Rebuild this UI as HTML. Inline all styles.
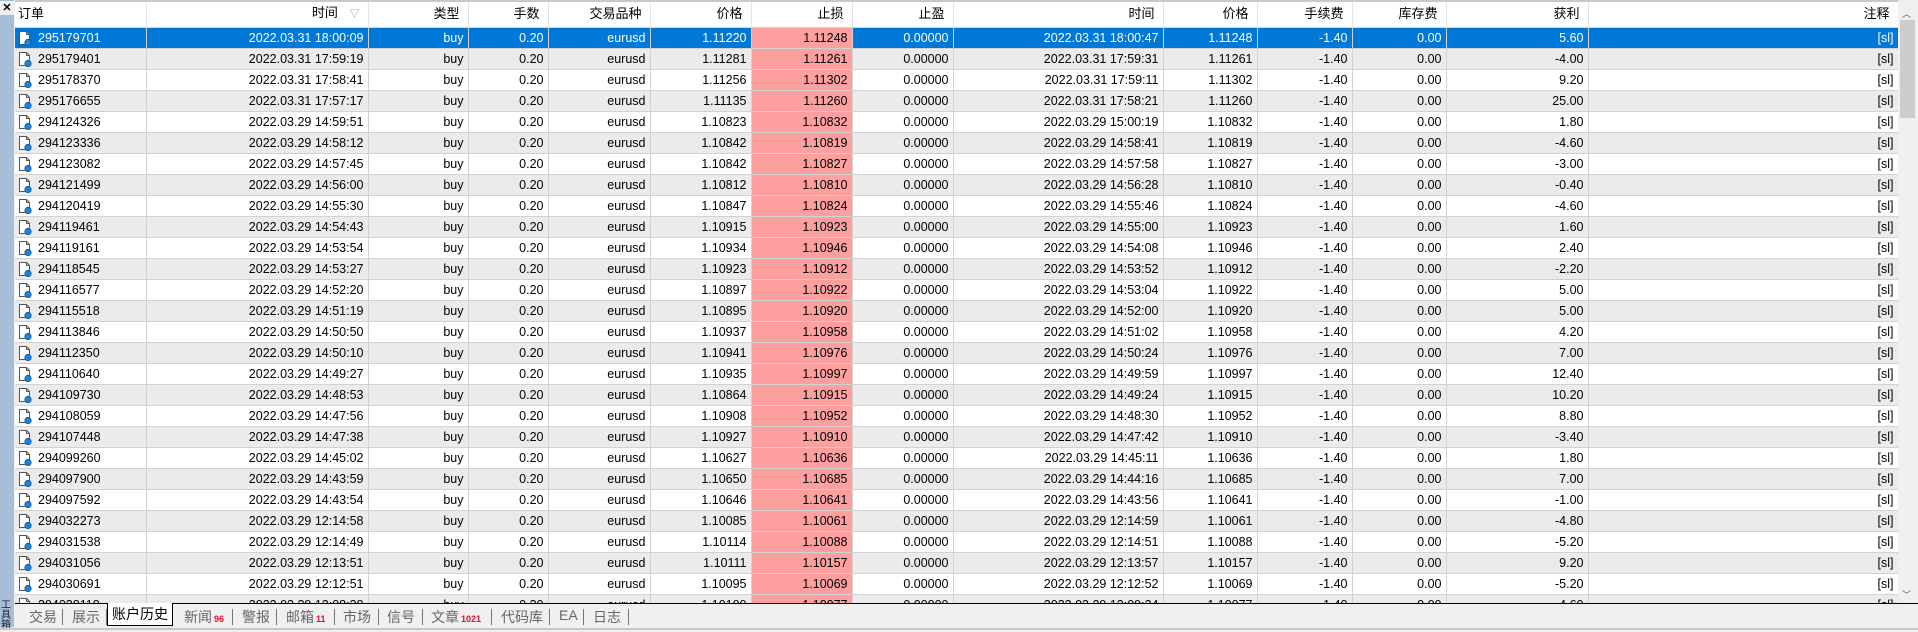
<!DOCTYPE html>
<html><head><meta charset="utf-8">
<style>
*{margin:0;padding:0;box-sizing:border-box}
body{width:1918px;height:632px;overflow:hidden;background:#f0f0f0;font-family:"Liberation Sans","Noto Sans CJK SC",sans-serif;font-size:12.5px;color:#000;position:relative}
#side{position:absolute;left:0;top:0;width:14px;height:627px;background:#a7bdd8}
#side .x{position:absolute;top:1px;font-size:11px;font-weight:bold;color:#000;background:#f0f0f0;width:14px;height:14px;left:0;text-align:center;line-height:14px}
#side .v{position:absolute;left:1px;top:601px;width:12px;font-size:10px;line-height:10px;color:#223}
#grid{position:absolute;left:15px;top:0;width:1883px;height:603px;overflow:hidden;background:#fff;border-top:2px solid #c8c8c8}
table{border-collapse:collapse;table-layout:fixed;width:1883px}
td,th{height:21px;border-right:1px solid #d2d2d2;border-bottom:1px solid #d2d2d2;text-align:right;padding:0 4px 0 0;white-space:nowrap;overflow:hidden;font-weight:normal;line-height:20px}
th{height:25px;border-bottom:1px solid #d2d2d2;border-right:1px solid #e4e4e4;padding-right:8px;font-size:13px}
th.l{text-align:left;padding-left:3px}
td.l{text-align:left;padding-left:3px}
tr:nth-child(even) td{background:#ebebeb}
tr.sel td{background:#0078d7;color:#fff}
td.p,tr.sel td.p,tr:nth-child(even) td.p{background:#ffa0a0;color:#000}
td.l svg{vertical-align:-4px;margin-right:6px}
#sb{position:absolute;left:1898px;top:0;width:20px;height:603px;background:#f0f0f0}
#sb .th{position:absolute;left:2px;top:20px;width:15px;height:98px;background:#cdcdcd}
#sb .u{position:absolute;left:4px;top:7px;font-size:9px;color:#555}
#sb .d{position:absolute;left:4px;top:588px;font-size:9px;color:#555}
#tabs{position:absolute;left:15px;top:603px;width:1903px;height:25px;border-top:1px solid #000;background:#f0f0f0}
#tabs span{position:absolute;top:3px;color:#666;font-size:14px}
#tabs i{position:absolute;top:5px;width:1px;height:16px;background:#777}
#tabs b{color:#e0102a;font-size:9px;font-weight:bold;margin-left:2px}
#act{position:absolute;left:92px;top:-1px!important;width:66px;height:23px;background:#fff;border:1px solid #000;border-top:none;color:#000!important;text-align:center;line-height:22px}
#bl{position:absolute;left:0;top:628px;width:1918px;height:2px;background:#c8c8c8}
</style></head><body>
<div id="side"><div class="x">✕</div><div class="v">工具箱</div></div>
<div id="grid">
<table>
<colgroup><col style="width:131px"><col style="width:222px"><col style="width:100px"><col style="width:80px"><col style="width:102px"><col style="width:101px"><col style="width:101px"><col style="width:101px"><col style="width:210px"><col style="width:94px"><col style="width:95px"><col style="width:94px"><col style="width:142px"><col style="width:310px"></colgroup>
<tr><th class="l">订单</th><th>时间 <span style="color:#999;font-size:10px;margin-left:8px">▽</span></th><th>类型</th><th>手数</th><th>交易品种</th><th>价格</th><th>止损</th><th>止盈</th><th>时间</th><th>价格</th><th>手续费</th><th>库存费</th><th>获利</th><th>注释</th></tr>
<tbody id="tb"></tbody>
</table>
</div>
<div id="sb"><div class="u">︿</div><div class="th"></div><div class="d">﹀</div></div>
<div id="tabs">
<span style="left:14px">交易</span><i style="left:47px"></i>
<span style="left:57px">展示</span><i style="left:91px"></i>
<span id="act">账户历史</span>
<span style="left:169px">新闻<b>96</b></span><i style="left:217px"></i>
<span style="left:227px">警报</span><i style="left:261px"></i>
<span style="left:271px">邮箱<b>11</b></span><i style="left:319px"></i>
<span style="left:328px">市场</span><i style="left:363px"></i>
<span style="left:372px">信号</span><i style="left:407px"></i>
<span style="left:416px">文章<b>1021</b></span><i style="left:476px"></i>
<span style="left:486px">代码库</span><i style="left:534px"></i>
<span style="left:544px">EA</span><i style="left:568px"></i>
<span style="left:578px">日志</span><i style="left:613px"></i>
</div>
<div id="bl"></div>
<script>
var d=[
["295179701","2022.03.31 18:00:09","1.11220","1.11248","2022.03.31 18:00:47","5.60"],
["295179401","2022.03.31 17:59:19","1.11281","1.11261","2022.03.31 17:59:31","-4.00"],
["295178370","2022.03.31 17:58:41","1.11256","1.11302","2022.03.31 17:59:11","9.20"],
["295176655","2022.03.31 17:57:17","1.11135","1.11260","2022.03.31 17:58:21","25.00"],
["294124326","2022.03.29 14:59:51","1.10823","1.10832","2022.03.29 15:00:19","1.80"],
["294123336","2022.03.29 14:58:12","1.10842","1.10819","2022.03.29 14:58:41","-4.60"],
["294123082","2022.03.29 14:57:45","1.10842","1.10827","2022.03.29 14:57:58","-3.00"],
["294121499","2022.03.29 14:56:00","1.10812","1.10810","2022.03.29 14:56:28","-0.40"],
["294120419","2022.03.29 14:55:30","1.10847","1.10824","2022.03.29 14:55:46","-4.60"],
["294119461","2022.03.29 14:54:43","1.10915","1.10923","2022.03.29 14:55:00","1.60"],
["294119161","2022.03.29 14:53:54","1.10934","1.10946","2022.03.29 14:54:08","2.40"],
["294118545","2022.03.29 14:53:27","1.10923","1.10912","2022.03.29 14:53:52","-2.20"],
["294116577","2022.03.29 14:52:20","1.10897","1.10922","2022.03.29 14:53:04","5.00"],
["294115518","2022.03.29 14:51:19","1.10895","1.10920","2022.03.29 14:52:00","5.00"],
["294113846","2022.03.29 14:50:50","1.10937","1.10958","2022.03.29 14:51:02","4.20"],
["294112350","2022.03.29 14:50:10","1.10941","1.10976","2022.03.29 14:50:24","7.00"],
["294110640","2022.03.29 14:49:27","1.10935","1.10997","2022.03.29 14:49:59","12.40"],
["294109730","2022.03.29 14:48:53","1.10864","1.10915","2022.03.29 14:49:24","10.20"],
["294108059","2022.03.29 14:47:56","1.10908","1.10952","2022.03.29 14:48:30","8.80"],
["294107448","2022.03.29 14:47:38","1.10927","1.10910","2022.03.29 14:47:42","-3.40"],
["294099260","2022.03.29 14:45:02","1.10627","1.10636","2022.03.29 14:45:11","1.80"],
["294097900","2022.03.29 14:43:59","1.10650","1.10685","2022.03.29 14:44:16","7.00"],
["294097592","2022.03.29 14:43:54","1.10646","1.10641","2022.03.29 14:43:56","-1.00"],
["294032273","2022.03.29 12:14:58","1.10085","1.10061","2022.03.29 12:14:59","-4.80"],
["294031538","2022.03.29 12:14:49","1.10114","1.10088","2022.03.29 12:14:51","-5.20"],
["294031056","2022.03.29 12:13:51","1.10111","1.10157","2022.03.29 12:13:57","9.20"],
["294030691","2022.03.29 12:12:51","1.10095","1.10069","2022.03.29 12:12:52","-5.20"],
["294028118","2022.03.29 12:08:38","1.10100","1.10077","2022.03.29 12:09:34","-4.60"]];
var ic='<svg width="14" height="16" viewBox="0 0 14 16"><path d="M1.5 1.5h7l3 3v10h-10z" fill="#fff" stroke="#555"/><path d="M8.5 1.5v3h3" fill="none" stroke="#555"/><circle cx="10" cy="12.5" r="3.2" fill="#1b83d8" stroke="#0a5aa8" stroke-width=".8"/></svg>';
var h='';
d.forEach(function(r,i){
h+='<tr'+(i==0?' class="sel"':'')+'><td class="l">'+ic+r[0]+'</td><td>'+r[1]+'</td><td>buy</td><td>0.20</td><td>eurusd</td><td>'+r[2]+'</td><td class="p">'+r[3]+'</td><td>0.00000</td><td>'+r[4]+'</td><td>'+r[3]+'</td><td>-1.40</td><td>0.00</td><td>'+r[5]+'</td><td>[sl]</td></tr>';
});
document.getElementById('tb').innerHTML=h;
</script>
</body></html>
